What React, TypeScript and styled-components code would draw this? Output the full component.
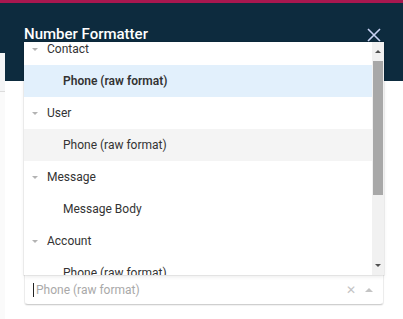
import React, { FC } from "react";
import styled, { createGlobalStyle } from "styled-components";

const GlobalStyle = createGlobalStyle`
  html, body {
    margin: 0;
    padding: 0;
    background: #ffffff;
    font-family: Roboto, "Liberation Sans", Arial, sans-serif;
    overflow: hidden;
  }
`;

const Screen = styled.div`
  width: 403px;
  height: 319px;
  display: flex;
  flex-direction: column;
  overflow: hidden;
`;

const AccentBar = styled.div`
  height: 3px;
  background: #a8174f;
  flex: none;
`;

const Stage = styled.div`
  flex: 1;
  display: flex;
`;

const PageEdge = styled.div`
  width: 5px;
  flex: none;
  background: #0d2b3e;
  display: flex;
  flex-direction: column;
`;

const EdgeCard = styled.div`
  margin-top: 50px;
  height: 38px;
  background: #f4f5f6;
  border-bottom: 1px solid #dcdcdc;
`;

const EdgeRest = styled.div`
  flex: 1;
  background: #fafafa;
`;

const Modal = styled.div`
  flex: 1;
  display: flex;
  flex-direction: column;
`;

const Header = styled.div`
  height: 78px;
  background: #0d2b3e;
  display: flex;
  align-items: flex-start;
  justify-content: space-between;
  padding: 22px 22px 0 19px;
  box-sizing: border-box;
`;

const Title = styled.h1`
  margin: 0;
  font-size: 15px;
  font-weight: 500;
  color: #ffffff;
`;

const Close = styled.button`
  border: 0;
  background: none;
  padding: 0;
  margin-top: 3px;
  width: 14px;
  height: 14px;
  display: flex;
`;

const Body = styled.div`
  flex: 1;
  padding: 194px 19px 0 19px;
`;

const SelectWrap = styled.div`
  position: relative;
`;

const Control = styled.div`
  height: 30px;
  background: #fff;
  border-bottom: 1px solid #cfcfcf;
  border-left: 1px solid #ececec;
  border-right: 1px solid #ececec;
  border-radius: 0 0 4px 4px;
  box-shadow: 0 1px 1px rgba(0, 0, 0, 0.06);
  display: flex;
  align-items: center;
  padding: 0 10px 0 8px;
  box-sizing: border-box;
`;

const Caret = styled.span`
  width: 1px;
  height: 14px;
  background: #222;
  margin-right: 2px;
`;

const Placeholder = styled.span`
  flex: 1;
  font-size: 12px;
  color: #a9a9a9;
`;

const ClearMark = styled.span`
  font-size: 12px;
  color: #c4c4c4;
  margin-right: 9px;
`;

const Arrow = styled.span<{ $up?: boolean; $color: string; $size: number }>`
  width: 0;
  height: 0;
  border-left: ${p => p.$size}px solid transparent;
  border-right: ${p => p.$size}px solid transparent;
  ${p =>
    p.$up
      ? `border-bottom: ${p.$size}px solid ${p.$color};`
      : `border-top: ${p.$size}px solid ${p.$color};`}
`;

const Menu = styled.div`
  position: absolute;
  left: 0;
  right: 0;
  bottom: 100%;
  height: 233px;
  display: flex;
  background: #fff;
  box-shadow: 0 0 0 1px rgba(0, 0, 0, 0.05), 0 2px 4px rgba(0, 0, 0, 0.08);
`;

const MenuViewport = styled.div`
  flex: 1;
  overflow: hidden;
`;

const MenuList = styled.div`
  margin-top: -9px;
`;

const GroupRow = styled.div`
  height: 32px;
  display: flex;
  align-items: center;
  padding-left: 8px;
  font-size: 12px;
  color: #333;
  gap: 9px;
`;

const OptionRow = styled.div<{ $state?: "selected" | "focused" }>`
  height: 32px;
  display: flex;
  align-items: center;
  padding-left: 39px;
  font-size: 12px;
  color: #333;
  font-weight: ${p => (p.$state === "selected" ? 600 : 400)};
  background: ${p =>
    p.$state === "selected" ? "#e2f0fc" : p.$state === "focused" ? "#f4f4f4" : "#fff"};
`;

const Scrollbar = styled.div`
  width: 12px;
  flex: none;
  background: #f1f1f1;
  display: flex;
  flex-direction: column;
  align-items: center;
`;

const ScrollButton = styled.div`
  height: 19px;
  display: flex;
  align-items: center;
  justify-content: center;
`;

const Thumb = styled.div`
  width: 10px;
  height: 134px;
  background: #a8a8a8;
`;

const Track = styled.div`
  flex: 1;
`;

type Item = { kind: "group" | "option"; label: string; state?: "selected" | "focused" };

const items: Item[] = [
  { kind: "group", label: "Contact" },
  { kind: "option", label: "Phone (raw format)", state: "selected" },
  { kind: "group", label: "User" },
  { kind: "option", label: "Phone (raw format)", state: "focused" },
  { kind: "group", label: "Message" },
  { kind: "option", label: "Message Body" },
  { kind: "group", label: "Account" },
  { kind: "option", label: "Phone (raw format)" }
];

const CloseIcon: FC = () => (
  <svg width="14" height="14" viewBox="0 0 14 14">
    <path d="M1 1 L13 13 M13 1 L1 13" stroke="#c9d2f4" strokeWidth="1.6" fill="none" />
  </svg>
);

const App: FC = () => (
  <>
    <GlobalStyle />
    <Screen>
      <AccentBar />
      <Stage>
        <PageEdge>
          <EdgeCard />
          <EdgeRest />
        </PageEdge>
        <Modal>
          <Header>
            <Title>Number Formatter</Title>
            <Close aria-label="Close">
              <CloseIcon />
            </Close>
          </Header>
          <Body>
            <SelectWrap>
              <Menu>
                <MenuViewport>
                  <MenuList>
                    {items.map((item, i) =>
                      item.kind === "group" ? (
                        <GroupRow key={i}>
                          <Arrow $color="#b3b3b3" $size={3.5} />
                          {item.label}
                        </GroupRow>
                      ) : (
                        <OptionRow key={i} $state={item.state}>
                          {item.label}
                        </OptionRow>
                      )
                    )}
                  </MenuList>
                </MenuViewport>
                <Scrollbar>
                  <ScrollButton>
                    <Arrow $up $color="#505050" $size={3.5} />
                  </ScrollButton>
                  <Thumb />
                  <Track />
                  <ScrollButton>
                    <Arrow $color="#505050" $size={3.5} />
                  </ScrollButton>
                </Scrollbar>
              </Menu>
              <Control>
                <Caret />
                <Placeholder>Phone (raw format)</Placeholder>
                <ClearMark>✕</ClearMark>
                <Arrow $up $color="#c4c4c4" $size={4} />
              </Control>
            </SelectWrap>
          </Body>
        </Modal>
      </Stage>
    </Screen>
  </>
);

export default App;
